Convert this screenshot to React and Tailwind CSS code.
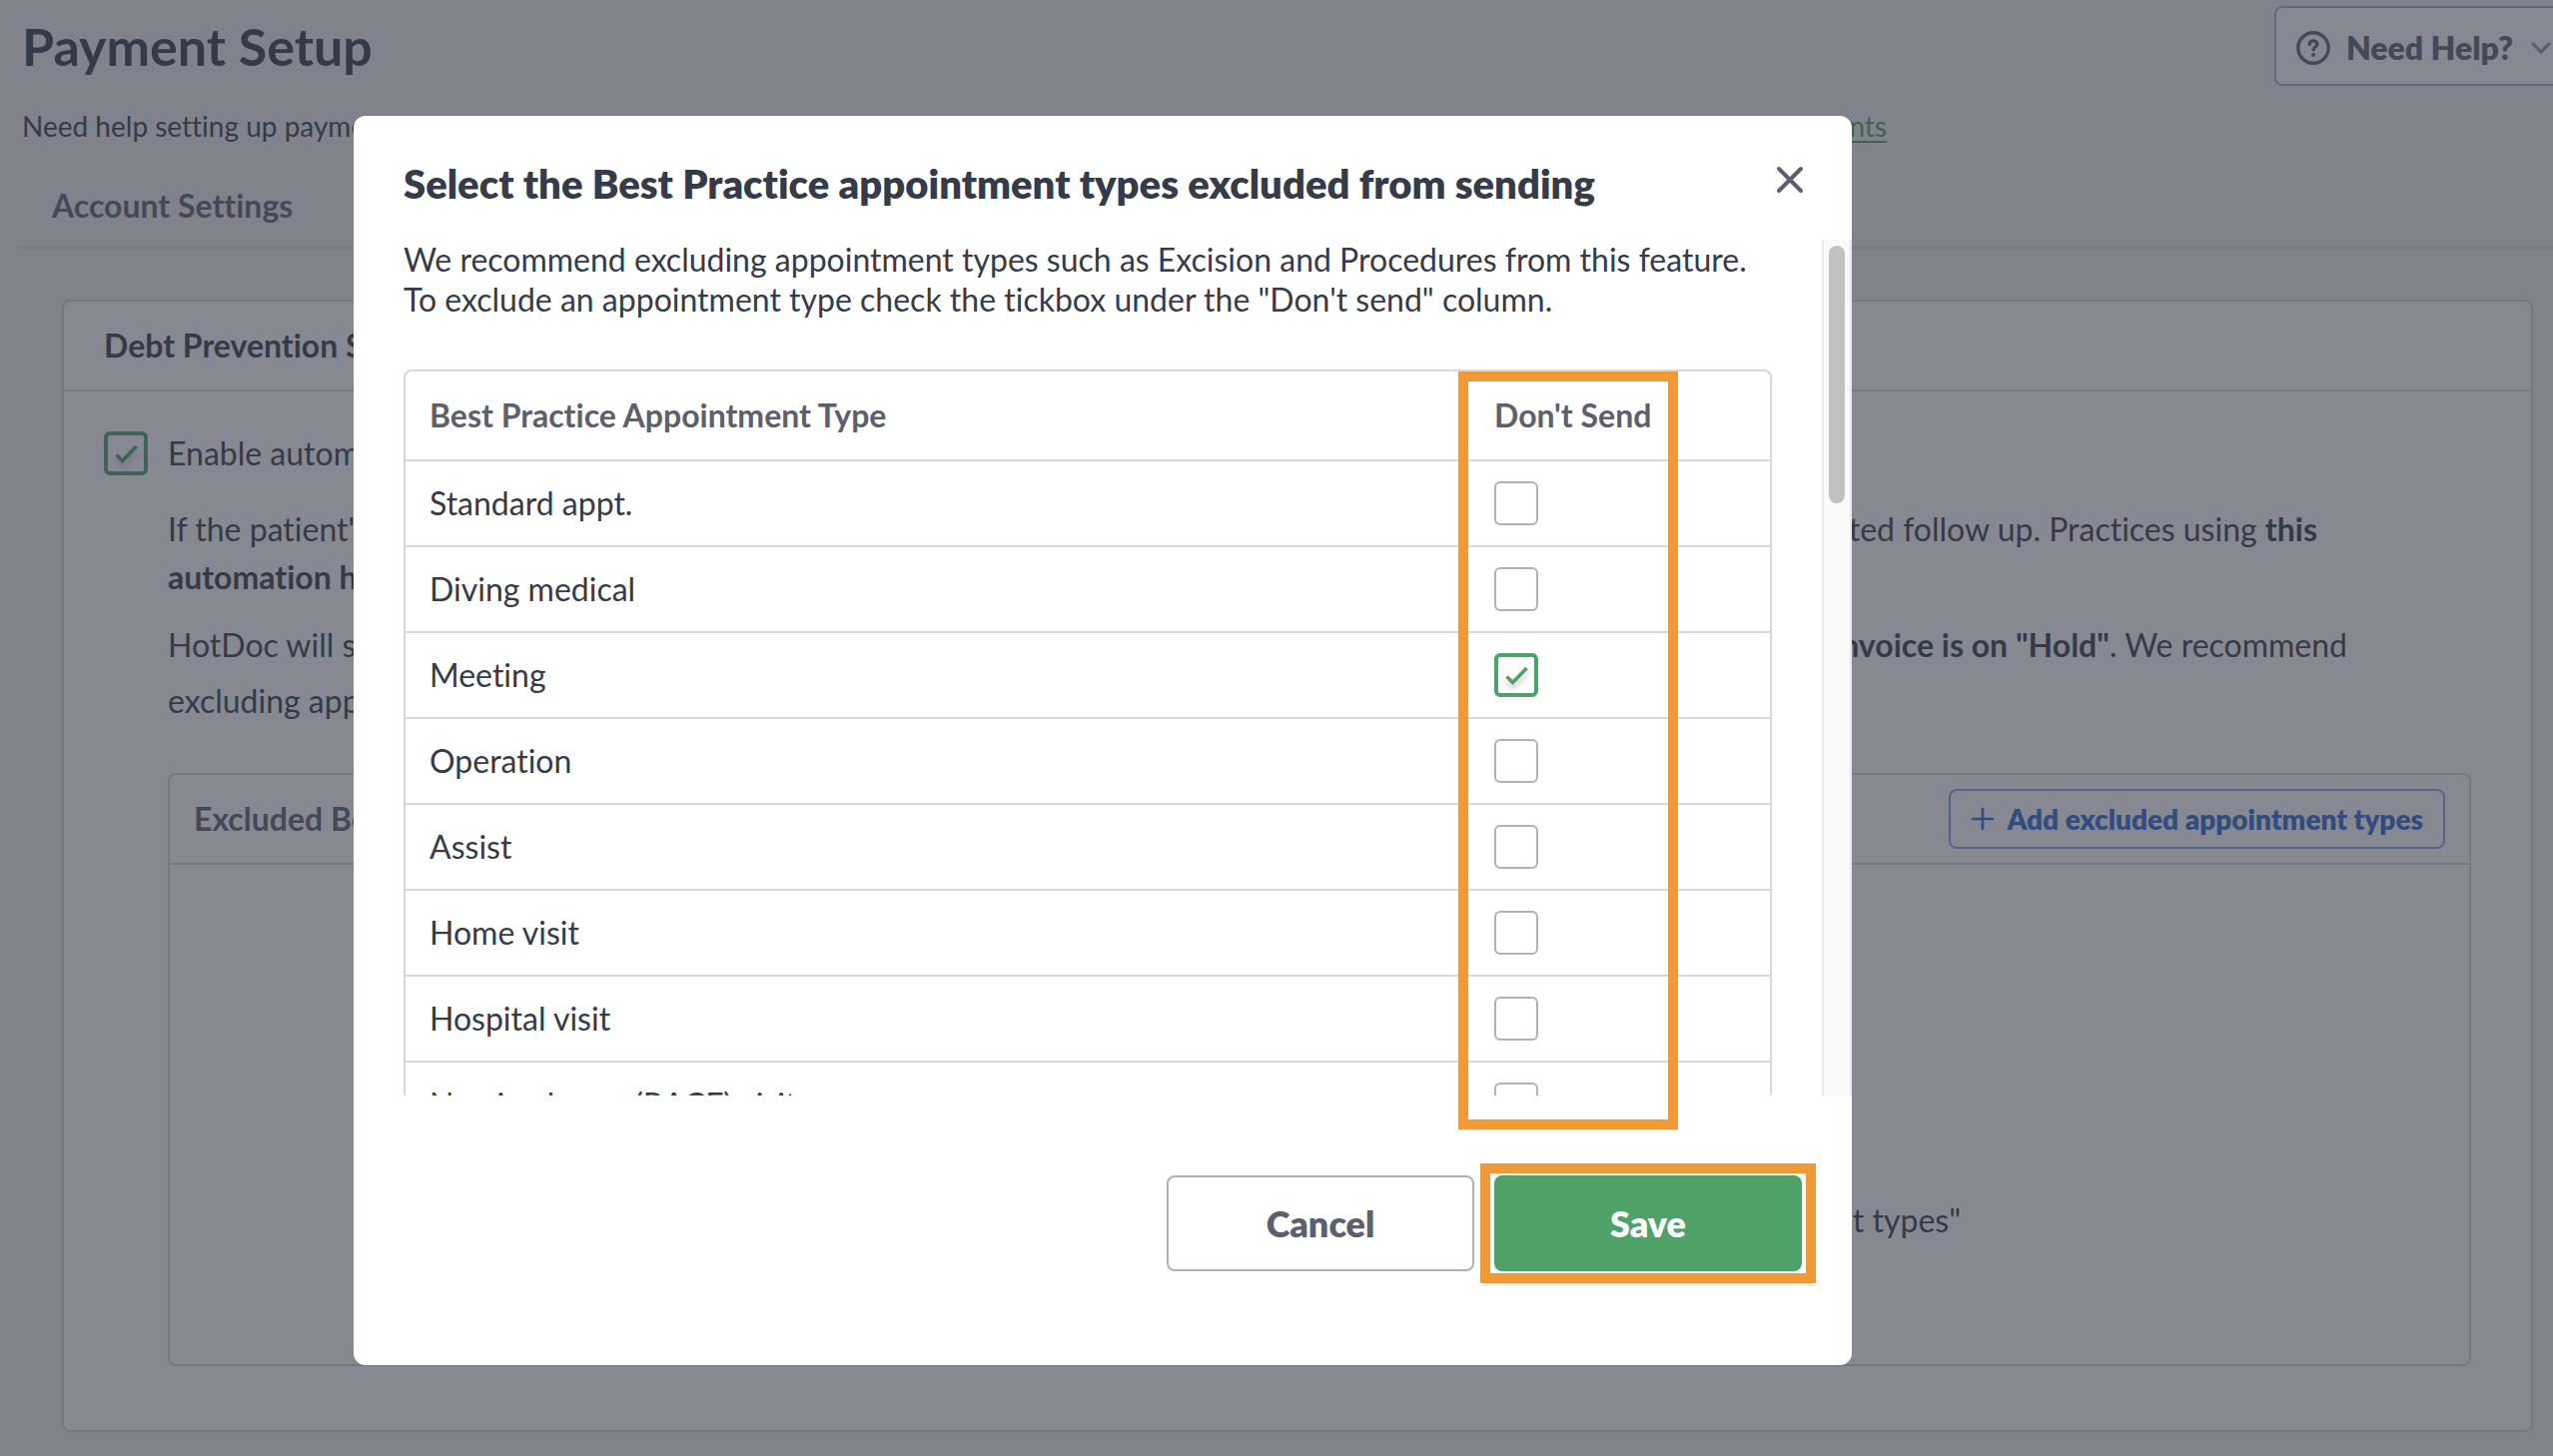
import React, { useState } from "react";

const APPOINTMENT_TYPES = [
  "Standard appt.",
  "Diving medical",
  "Meeting",
  "Operation",
  "Assist",
  "Home visit",
  "Hospital visit",
  "Nursing home (RACF) visit",
];

function Checkbox({ id, label, checked, onChange }) {
  return (
    <span className="relative block size-11 shrink-0">
      <input
        id={id}
        type="checkbox"
        aria-label={label}
        checked={checked}
        onChange={onChange}
        className="peer block size-11 appearance-none rounded-md border-2 border-[#b0b0b8] bg-white checked:border-4 checked:border-[#4ea167]"
      />
      <svg
        viewBox="0 0 44 44"
        fill="none"
        aria-hidden="true"
        className="pointer-events-none absolute inset-0 hidden size-11 drop-shadow-[0_4px_3px_rgba(0,0,0,0.25)] peer-checked:block"
      >
        <path d="M12.5 23.5L18.5 29.5L32.5 15" stroke="#4ea167" strokeWidth="3.6" />
      </svg>
    </span>
  );
}

function HelpIcon() {
  return (
    <svg viewBox="0 0 34 34" fill="none" aria-hidden="true" className="size-[34px] shrink-0">
      <circle cx="17" cy="17" r="15.2" stroke="#5c606d" strokeWidth="3.4" />
      <path
        d="M13.2 13.4c0-2.3 1.7-3.5 3.8-3.5s3.9 1.2 3.9 3.3c0 2.7-3.7 2.9-3.7 5.6"
        stroke="#5c606d"
        strokeWidth="3.4"
        strokeLinecap="round"
      />
      <circle cx="17.1" cy="24" r="2.1" fill="#5c606d" />
    </svg>
  );
}

function PaymentSetupPage() {
  const [enabled, setEnabled] = useState(true);
  return (
    <div className="pl-[22px] pt-1.5">
      <header className="flex items-start justify-between">
        <h1 className="pt-2 text-[52px] leading-[64px] font-bold">Payment Setup</h1>
        <button
          type="button"
          className="-mr-6 flex h-20 items-center rounded-lg border-2 border-[#b0b0b8] bg-white pt-1 pr-6 pl-5 text-[32px] font-extrabold text-[#5c606d]"
        >
          <HelpIcon />
          <span className="ml-4">Need Help?</span>
          <svg viewBox="0 0 20 12" fill="none" aria-hidden="true" className="ml-[18px] h-3 w-5">
            <path d="M2 2l8 8 8-8" stroke="#9a9ca6" strokeWidth="3.2" strokeLinecap="round" />
          </svg>
        </button>
      </header>

      <p className="mt-5 flex w-[1867px] justify-between text-[28px] leading-10">
        <span>Need help setting up payments?</span>
        <a href="#guide" className="text-[#4ea167] underline underline-offset-4">
          Setting up payments
        </a>
      </p>

      <nav className="mt-10 border-b-4 border-[#dcdcdc] px-[30px] pb-5 text-[32px] leading-10 font-bold text-[#5c606d]">
        <a href="#account">Account Settings</a>
      </nav>

      <section className="mt-[50px] mr-5 ml-10 rounded-lg border-2 border-[#d5d5d5] bg-white pb-16">
        <h2 className="border-b-2 border-[#d5d5d5] px-10 py-6 text-[32px] leading-10 font-bold">
          Debt Prevention Settings
        </h2>
        <div className="px-10 pt-10 text-[32px]">
          <label htmlFor="enable" className="flex items-center gap-5 leading-[44px]">
            <Checkbox
              id="enable"
              checked={enabled}
              onChange={() => setEnabled(!enabled)}
            />
            Enable automated follow up
          </label>
          <div className="ml-16 mr-5">
            <p className="mt-[30px] w-[2152px] leading-[48px]">
              <span className="flex justify-between">
                <span>If the patient's invoice</span>
                <span>
                  automated follow up. Practices using <b>this</b>
                </span>
              </span>
              <b>automation have less debt.</b>
            </p>
            <p className="mt-4 w-[2182px] leading-[56px]">
              <span className="flex justify-between">
                <span>HotDoc will send</span>
                <span>
                  <b>invoice is on "Hold"</b>. We recommend
                </span>
              </span>
              excluding appointment types.
            </p>
            <section className="mt-11 rounded-lg border-2 border-[#d5d5d5]">
              <div className="flex items-center justify-between border-b-2 border-[#d5d5d5] py-3.5 pr-6 pl-6">
                <h3 className="font-bold text-[#5c606d]">Excluded Best Practice types</h3>
                <button
                  type="button"
                  className="flex h-[60px] items-center gap-3 rounded-lg border-2 border-[#7da5ed] px-5 text-[28px] font-extrabold text-[#2b66d2]"
                >
                  <svg viewBox="0 0 24 24" fill="none" aria-hidden="true" className="size-6">
                    <path d="M12 2v20M2 12h20" stroke="#2b66d2" strokeWidth="2.6" strokeLinecap="round" />
                  </svg>
                  Add excluded appointment types
                </button>
              </div>
              <div className="flex h-[500px] items-end justify-center pb-[124px]">
                <p className="w-[1284px] text-right leading-10">
                  Click "Add excluded appointment types"
                </p>
              </div>
            </section>
          </div>
        </div>
      </section>
    </div>
  );
}

function ExclusionDialog() {
  const [excluded, setExcluded] = useState(["Meeting"]);
  const toggle = (name) =>
    setExcluded((list) =>
      list.includes(name) ? list.filter((n) => n !== name) : [...list, name]
    );
  return (
    <div
      role="dialog"
      aria-modal="true"
      aria-labelledby="dialog-title"
      className="w-full max-w-[1500px] rounded-xl bg-white pb-[94px]"
    >
      <div className="flex items-start justify-between pt-11 pr-12 pb-8 pl-[50px]">
        <h2 id="dialog-title" className="text-[40px] leading-[48px] font-extrabold">
          Select the Best Practice appointment types excluded from sending
        </h2>
        <button type="button" aria-label="Close" className="mt-1.5">
          <svg viewBox="0 0 28 28" fill="none" aria-hidden="true" className="size-7">
            <path d="M3 3l22 22M25 3L3 25" stroke="#5c606d" strokeWidth="4" strokeLinecap="round" />
          </svg>
        </button>
      </div>

      <div className="relative text-[32px]">
        <div className="flex h-[857px] overflow-hidden">
          <div className="flex-1 pr-[50px] pl-[50px]">
            <p className="leading-10">
              We recommend excluding appointment types such as Excision and Procedures from this
              feature. To exclude an appointment type check the tickbox under the "Don't send"
              column.
            </p>
            <div className="mt-[50px] rounded-lg border-2 border-[#d8d8d8]">
              <table className="w-full text-left">
                <thead>
                  <tr className="border-b-2 border-[#d8d8d8] leading-10 text-[#5c606d]">
                    <th scope="col" className="py-6 pl-6 font-bold">
                      Best Practice Appointment Type
                    </th>
                    <th scope="col" className="w-[300px] py-6 pl-6 font-bold">
                      Don't Send
                    </th>
                  </tr>
                </thead>
                <tbody>
                  {APPOINTMENT_TYPES.map((name, i) => (
                    <tr key={name} className="h-[86px] border-b-2 border-[#d8d8d8]">
                      <td className="pl-6">
                        <label htmlFor={`type-${i}`}>{name}</label>
                      </td>
                      <td className="pl-6">
                        <Checkbox
                          id={`type-${i}`}
                          checked={excluded.includes(name)}
                          onChange={() => toggle(name)}
                        />
                      </td>
                    </tr>
                  ))}
                </tbody>
              </table>
            </div>
          </div>
          <div className="w-[30px] border-x-2 border-[#e9e9e9] bg-[#fafafa] px-[5px] pt-1.5">
            <div className="h-[258px] w-4 rounded-full bg-[#c1c1c1]" />
          </div>
        </div>
        <div className="pointer-events-none absolute top-[132px] right-[174px] h-[759px] w-[220px] border-10 border-[#f09a37]" />
      </div>

      <div className="mt-20 flex justify-end gap-5 pr-[50px] text-[36px] font-extrabold">
        <button
          type="button"
          className="h-24 w-[308px] rounded-lg border-2 border-[#b0b0b8] text-[#5c606d]"
        >
          Cancel
        </button>
        <div className="relative">
          <button type="button" className="h-24 w-[308px] rounded-lg bg-[#4ea167] text-white">
            Save
          </button>
          <div className="pointer-events-none absolute -inset-x-3.5 -inset-y-3 border-10 border-[#f09a37]" />
        </div>
      </div>
    </div>
  );
}

export default function App() {
  return (
    <div className="relative min-h-screen overflow-hidden bg-[#f0f0f0] font-['Lato',sans-serif] [font-variant-ligatures:none] text-[#353b48]">
      <PaymentSetupPage />
      <div className="absolute inset-0 flex items-start bg-[#353b48]/60 pt-[116px] pl-[354px]">
        <ExclusionDialog />
      </div>
    </div>
  );
}
